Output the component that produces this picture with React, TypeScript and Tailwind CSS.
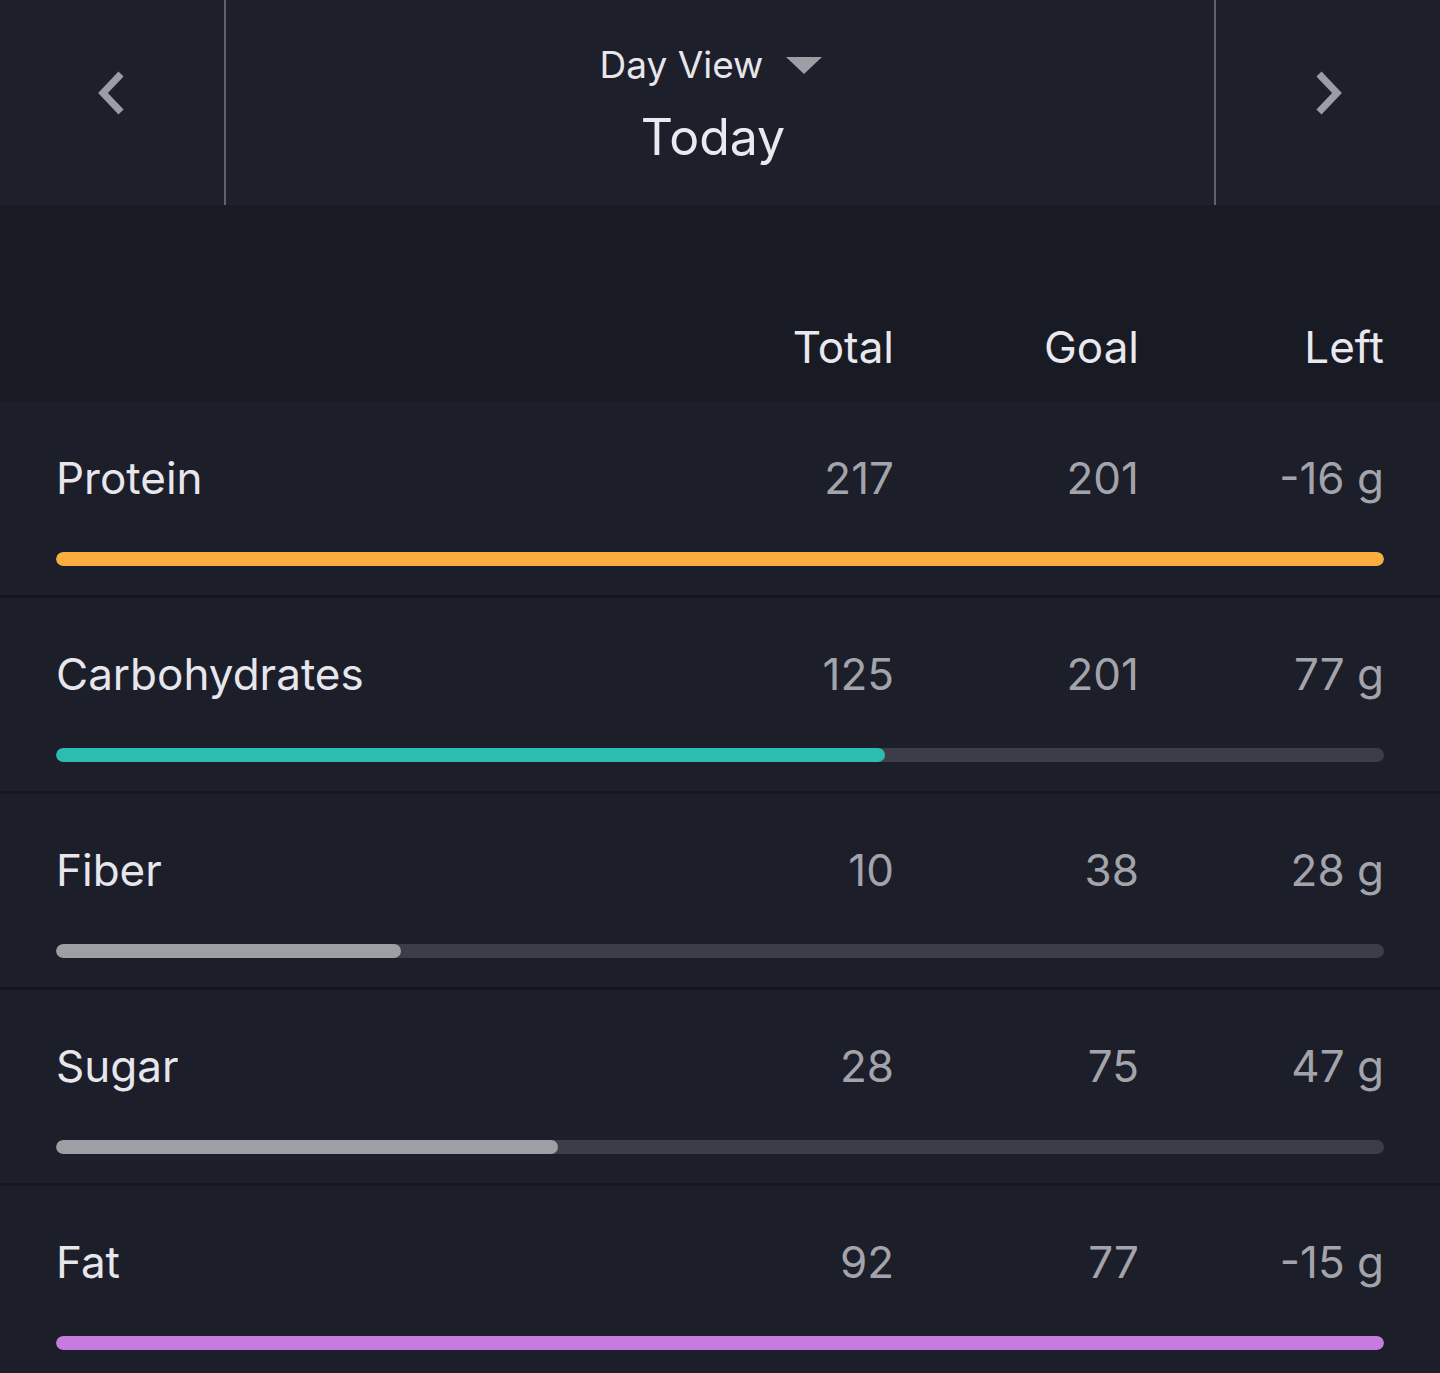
import React from "react";

const rows = [
  { name: "Protein", total: "217", goal: "201", left: "-16 g", pct: 100, color: "#f9ae3f" },
  { name: "Carbohydrates", total: "125", goal: "201", left: "77 g", pct: 62.4, color: "#2dbcb1" },
  { name: "Fiber", total: "10", goal: "38", left: "28 g", pct: 26, color: "#9e9fa5" },
  { name: "Sugar", total: "28", goal: "75", left: "47 g", pct: 37.8, color: "#9e9fa5" },
  { name: "Fat", total: "92", goal: "77", left: "-15 g", pct: 100, color: "#c67bdf" },
];

export default function App() {
  return (
    <div
      className="w-[1440px] h-[1373px] overflow-hidden bg-[#1c1e29]"
      style={{ fontFamily: "Inter, 'Noto Sans', sans-serif" }}
    >
      {/* Header */}
      <div className="flex h-[205px] bg-[#1d1f2a]">
        <div className="w-[226px] border-r-2 border-[#5f626d] flex justify-center pt-[71px]">
          <svg width="32" height="46" viewBox="0 0 32 46">
            <path d="M25 3 L7 22 L25 41" fill="none" stroke="#9b9da6" strokeWidth="7" strokeLinecap="butt" strokeLinejoin="miter" />
          </svg>
        </div>
        <div className="flex-1 flex flex-col items-center pt-[46px]">
          <div className="flex items-center gap-[23px] mr-[18px]">
            <span className="text-[37px] leading-[38px] text-[#e6e6ec]">Day View</span>
            <svg width="36" height="17" viewBox="0 0 36 17">
              <path d="M0 0 L36 0 L18 17 Z" fill="#9c9ea5" />
            </svg>
          </div>
          <div className="mt-[28px] text-[50px] leading-[50px] text-[#e9e9ef] mr-[14px]">Today</div>
        </div>
        <div className="w-[226px] border-l-2 border-[#5f626d] flex justify-center pt-[71px]">
          <svg width="32" height="46" viewBox="0 0 32 46">
            <path d="M7 3 L25 22 L7 41" fill="none" stroke="#9b9da6" strokeWidth="7" strokeLinecap="butt" strokeLinejoin="miter" />
          </svg>
        </div>
      </div>

      {/* Column header band */}
      <div className="h-[197px] bg-[#181a24] px-[56px] grid grid-cols-[1fr_245px_245px_245px] items-end pb-[33px]">
        <div />
        <div className="text-right text-[44px] leading-[44px] text-[#e8e8ee]">Total</div>
        <div className="text-right text-[44px] leading-[44px] text-[#e8e8ee]">Goal</div>
        <div className="text-right text-[44px] leading-[44px] text-[#e8e8ee]">Left</div>
      </div>

      {/* Rows */}
      {rows.map((r) => (
        <div key={r.name} className="h-[196px] border-b-[3px] border-[#15161e] bg-[#1c1e29] px-[56px] pt-[54px]">
          <div className="grid grid-cols-[1fr_245px_245px_245px] items-center">
            <div className="text-[44px] leading-[44px] text-[#e6e6ec]">{r.name}</div>
            <div className="text-right text-[44px] leading-[44px] text-[#a3a4ab]">{r.total}</div>
            <div className="text-right text-[44px] leading-[44px] text-[#a3a4ab]">{r.goal}</div>
            <div className="text-right text-[44px] leading-[44px] text-[#a3a4ab]">{r.left}</div>
          </div>
          <div className="mt-[52px] h-[14px] rounded-full bg-[#3b3d48] overflow-hidden">
            <div className="h-full rounded-full" style={{ width: `${r.pct}%`, backgroundColor: r.color }} />
          </div>
        </div>
      ))}
    </div>
  );
}
